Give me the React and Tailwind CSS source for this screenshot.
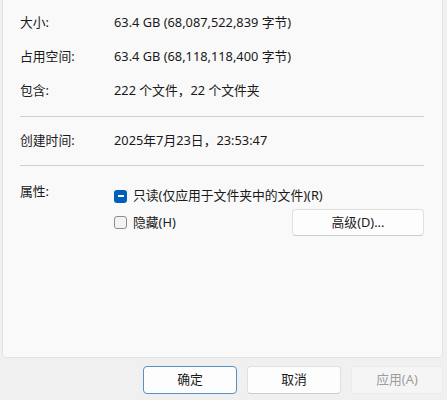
export default function App() {
  const font = { fontFamily: '"Segoe UI", "Noto Sans", "Noto Sans CJK SC", sans-serif' };
  return (
    <div className="w-[447px] h-[400px] bg-[#f0f0f0] text-[#1a1a1a] text-[12.8px] overflow-hidden" style={font}>
      <div className="ml-[2px] mr-[4px] -mt-[2px] h-[360px] bg-[#f9f9f9] border border-[#e3e3e3] rounded-b-[4px] pl-[17px] pr-[18px] pt-[7px]">
        <div className="flex h-[34px] items-center">
          <span className="w-[94px]">大小:</span>
          <span>63.4 GB (68,087,522,839 字节)</span>
        </div>
        <div className="flex h-[34px] items-center">
          <span className="w-[94px]">占用空间:</span>
          <span>63.4 GB (68,118,118,400 字节)</span>
        </div>
        <div className="flex h-[34px] items-center">
          <span className="w-[94px]">包含:</span>
          <span>222 个文件，22 个文件夹</span>
        </div>
        <div className="h-px bg-[#cfcfcf] mt-[8px]" />
        <div className="flex h-[48px] items-center">
          <span className="w-[94px]">创建时间:</span>
          <span>2025年7月23日，23:53:47</span>
        </div>
        <div className="h-px bg-[#cfcfcf]" />
        <div className="flex mt-[20px]">
          <span className="w-[94px] -mt-[4px]">属性:</span>
          <div className="flex-1">
            <div className="flex items-center gap-[6px] h-[20px]">
              <span className="w-[13px] h-[13px] rounded-[3px] bg-[#005fb8] flex items-center justify-center">
                <span className="w-[6px] h-[1.5px] bg-white" />
              </span>
              <span>只读(仅应用于文件夹中的文件)(R)</span>
            </div>
            <div className="flex items-center justify-between mt-[3px]">
              <div className="flex items-center gap-[6px]">
                <span className="w-[13px] h-[13px] rounded-[3px] border border-[#8d8d8d] bg-[#f3f3f3]" />
                <span>隐藏(H)</span>
              </div>
              <button className="w-[132px] h-[27px] bg-[#fdfdfd] border border-[#e0e0e0] border-b-[#cccccc] rounded-[4px]">
                高级(D)...
              </button>
            </div>
          </div>
        </div>
      </div>
      <div className="flex justify-end gap-[10px] pr-[4px] mt-[8px]">
        <button className="w-[94px] h-[28px] bg-[#fdfdfd] border border-[#5a8fc4] rounded-[4px]">确定</button>
        <button className="w-[94px] h-[28px] bg-[#fdfdfd] border border-[#e0e0e0] border-b-[#cccccc] rounded-[4px]">取消</button>
        <button className="w-[92px] h-[28px] bg-[#f5f5f5] border border-[#ebebeb] rounded-[4px] text-[#9d9d9d]">应用(A)</button>
      </div>
    </div>
  );
}
